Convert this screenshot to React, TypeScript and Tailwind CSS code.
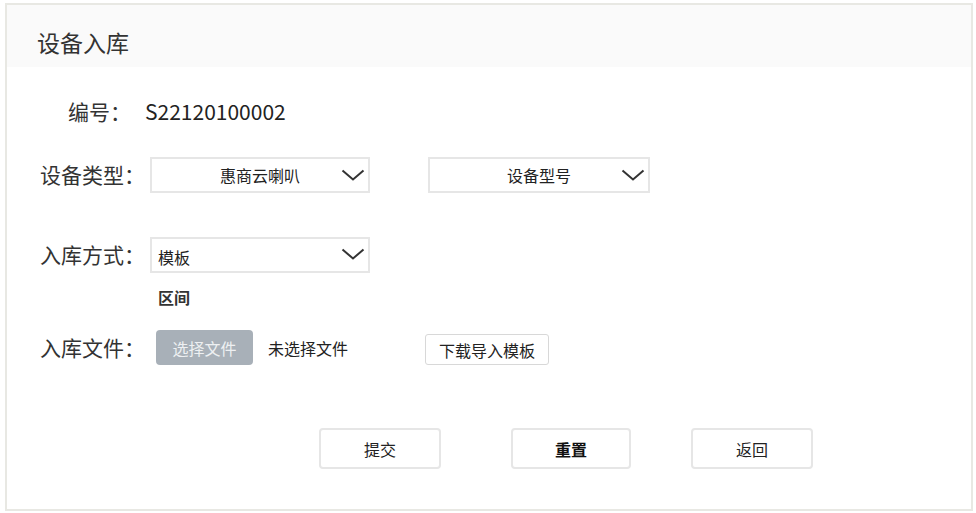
const font = { fontFamily: '"Noto Sans CJK SC", "Noto Sans", sans-serif' }

function Chevron({ className = '' }: { className?: string }) {
  return (
    <svg width="24" height="12" viewBox="0 0 24 12" className={className}>
      <path d="M1.5 1.5 L12 10.5 L22.5 1.5" fill="none" stroke="#333" strokeWidth="2" />
    </svg>
  )
}

function Select({ value, center, width }: { value: string; center?: boolean; width: string }) {
  return (
    <div
      className={`relative h-[36px] border-2 border-[#e6e6e6] bg-white flex ${width} ${
        center ? 'items-center justify-center' : 'items-end pb-[3px] pl-[6px]'
      }`}
    >
      <span className="text-[16px] leading-[22px] text-[#222]">{value}</span>
      <Chevron className={`absolute right-[3px] ${center ? 'top-[10px]' : 'top-[9px]'}`} />
    </div>
  )
}

export default function App() {
  return (
    <div className="w-[976px] h-[513px] bg-white pt-[3px] pl-[5px]" style={font}>
      <div className="w-[968px] h-[508px] border-2 border-[#e8e8e3] flex flex-col">
        {/* header */}
        <div className="h-[62px] bg-[#fafafa] pl-[30px] pt-[22px]">
          <h1 className="text-[23px] leading-[30px] text-[#333]">设备入库</h1>
        </div>

        <div className="flex flex-col pl-[33px] text-[#333]">
          {/* 编号 */}
          <div className="mt-[31px] flex items-center h-[28px] pl-[28px] text-[21px]">
            <span className="w-[77px]">编号：</span>
            <span className="text-[#222]">S22120100002</span>
          </div>

          {/* 设备类型 */}
          <div className="mt-[31px] flex items-center">
            <span className="w-[110px] text-[21px]">设备类型：</span>
            <Select value="惠商云喇叭" center width="w-[220px]" />
            <div className="ml-[58px]">
              <Select value="设备型号" center width="w-[222px]" />
            </div>
          </div>

          {/* 入库方式 */}
          <div className="mt-[44px] flex items-center">
            <span className="w-[110px] text-[21px]">入库方式：</span>
            <Select value="模板" width="w-[220px]" />
          </div>
          <div className="mt-[12px] pl-[118px] h-[24px] text-[16px] leading-[24px] font-bold text-[#333]">区间</div>

          {/* 入库文件 */}
          <div className="mt-[21px] flex items-center">
            <span className="w-[116px] text-[21px]">入库文件：</span>
            <button className="w-[97px] h-[35px] rounded-[4px] bg-[#a8b0b8] text-[16px] text-[#eef0f2]">
              选择文件
            </button>
            <span className="ml-[15px] text-[16px] text-[#222]">未选择文件</span>
            <button className="ml-[77px] mt-[4px] w-[124px] h-[31px] rounded-[3px] border border-[#d8d8d8] bg-white text-[16px] text-[#222]">
              下载导入模板
            </button>
          </div>

          {/* actions */}
          <div className="mt-[63px] flex pl-[279px]">
            <button className="w-[122px] h-[41px] rounded-[4px] border-2 border-[#e6e6e6] bg-white text-[16px] text-[#222]">
              提交
            </button>
            <button className="ml-[70px] w-[120px] h-[41px] rounded-[4px] border-2 border-[#e6e6e6] bg-white text-[16px] font-bold text-[#111]">
              重置
            </button>
            <button className="ml-[60px] w-[122px] h-[41px] rounded-[4px] border-2 border-[#e6e6e6] bg-white text-[16px] text-[#222]">
              返回
            </button>
          </div>
        </div>
      </div>
    </div>
  )
}
